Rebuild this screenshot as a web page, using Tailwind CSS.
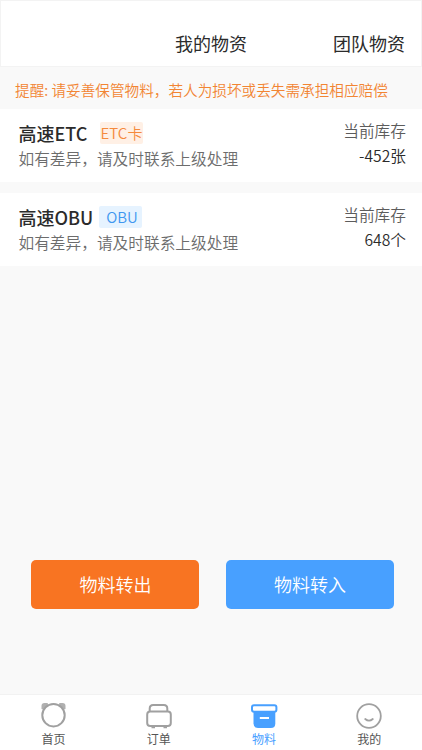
<!DOCTYPE html>
<html lang="zh-CN">
<head>
  <meta charset="UTF-8">
  <meta name="viewport" content="width=device-width, initial-scale=1.0">
  <title>我的物资</title>
  <script src="https://cdn.jsdelivr.net/npm/@tailwindcss/browser@4"></script>
</head>
<body class="bg-[#f9f9f9] font-['Noto_Sans_CJK_SC',sans-serif] font-[350] text-[#2b2b2b]">
  <div class="flex flex-col h-[750px] overflow-hidden whitespace-nowrap">

    <!-- Header -->
    <header class="grid grid-cols-3 items-end h-[67px] shrink-0 pb-[9px] px-4 bg-white border border-[#f3f3f3] text-[18px] leading-[28px] font-normal">
      <span></span>
      <h1 class="text-center">我的物资</h1>
      <a class="text-right">团队物资</a>
    </header>

    <!-- Notice -->
    <p class="h-[42px] shrink-0 pl-[15px] leading-[45px] text-[14.63px] text-[#f28533]">提醒: 请妥善保管物料，若人为损坏或丢失需承担相应赔偿</p>

    <!-- Stock list -->
    <div class="flex flex-col gap-[11px] shrink-0">
      <section class="flex justify-between h-[73px] bg-white pl-[18.5px] pr-4 pt-3">
        <div>
          <div class="flex items-center h-6">
            <h2 class="w-[81.5px] text-[18px] font-medium">高速ETC</h2>
            <span class="w-[43px] h-[22px] rounded-[2px] bg-[#fff0e5] text-center text-[15px] leading-[22px] text-[#f58a3c]">ETC卡</span>
          </div>
          <p class="mt-[2px] text-[15.7px] leading-6 text-[#6c6c6c]">如有差异，请及时联系上级处理</p>
        </div>
        <div class="text-right text-[15.7px] leading-[20px]">
          <p class="text-[#5c5c5c]">当前库存</p>
          <p class="mt-[5px]">-452张</p>
        </div>
      </section>

      <section class="flex justify-between h-[73px] bg-white pl-[18.5px] pr-4 pt-3">
        <div>
          <div class="flex items-center h-6">
            <h2 class="w-[80.5px] text-[18px] font-medium">高速OBU</h2>
            <span class="w-[43px] h-[22px] rounded-[2px] bg-[#e6f3ff] pl-[3px] text-center text-[15px] leading-[22px] text-[#3f97f0]">OBU</span>
          </div>
          <p class="mt-[2px] text-[15.7px] leading-6 text-[#6c6c6c]">如有差异，请及时联系上级处理</p>
        </div>
        <div class="text-right text-[15.7px] leading-[20px]">
          <p class="text-[#5c5c5c]">当前库存</p>
          <p class="mt-[5px]">648个</p>
        </div>
      </section>
    </div>

    <!-- Transfer buttons -->
    <div class="flex justify-between mt-auto mb-[85px] pl-[31px] pr-7 text-[18px] text-white">
      <button class="w-[168px] h-[49px] rounded-[5px] pl-px bg-[#f87422]">物料转出</button>
      <button class="w-[168px] h-[49px] rounded-[5px] bg-[#48a0ff]">物料转入</button>
    </div>

    <!-- Tab bar -->
    <nav class="grid grid-cols-4 h-[56px] shrink-0 bg-white border-t border-[#f2f2f2] pt-[6px] pl-px text-[12px] leading-[18px] font-normal text-[#555]">
      <a class="flex flex-col items-center gap-px">
        <svg class="w-[30px] h-[28px]" viewBox="0 0 30 28" fill="none">
          <path d="M2.5 8V5Q2.5 2 5.5 2H8Q9.5 2 9 3.5L4 8.5Z" fill="#b0b0b0" />
          <path d="M26.5 8V5Q26.5 2 23.5 2H21Q19.5 2 20 3.5L25 8.5Z" fill="#b0b0b0" />
          <circle cx="14.5" cy="14.2" r="11.2" fill="#fff" stroke="#a0a0a0" stroke-width="2" />
        </svg>
        <span>首页</span>
      </a>
      <a class="flex flex-col items-center gap-px">
        <svg class="w-[30px] h-[28px]" viewBox="0 0 30 28" fill="none" stroke="#a0a0a0" stroke-width="2">
          <path d="M5.7 11V7.5Q5.7 4 9.2 4H19.8Q23.3 4 23.3 7.5V11" />
          <rect x="3.2" y="10.5" width="23.6" height="14.5" rx="3" />
          <path d="M7.5 26.2H11M19.5 26.2H23" />
        </svg>
        <span>订单</span>
      </a>
      <a class="flex flex-col items-center gap-px text-[#48a0ff]">
        <svg class="w-[30px] h-[28px]" viewBox="0 0 30 28" fill="none" stroke="#48a0ff" stroke-width="2">
          <path d="M4.5 10H26.3V22.5Q26.3 27 21.8 27H9Q4.5 27 4.5 22.5Z" fill="#48a0ff" stroke="none" />
          <rect x="3" y="4.3" width="24.4" height="6.4" rx="2" fill="#fff" />
          <path d="M10.8 17H20" stroke="#fff" />
        </svg>
        <span>物料</span>
      </a>
      <a class="flex flex-col items-center gap-px">
        <svg class="w-[30px] h-[28px]" viewBox="0 0 30 28" fill="none" stroke="#a0a0a0" stroke-width="1.8">
          <circle cx="15" cy="15" r="11.8" />
          <path d="M11.2 18Q15 21.3 18.8 18" stroke-linecap="round" />
        </svg>
        <span>我的</span>
      </a>
    </nav>

  </div>
</body>
</html>
